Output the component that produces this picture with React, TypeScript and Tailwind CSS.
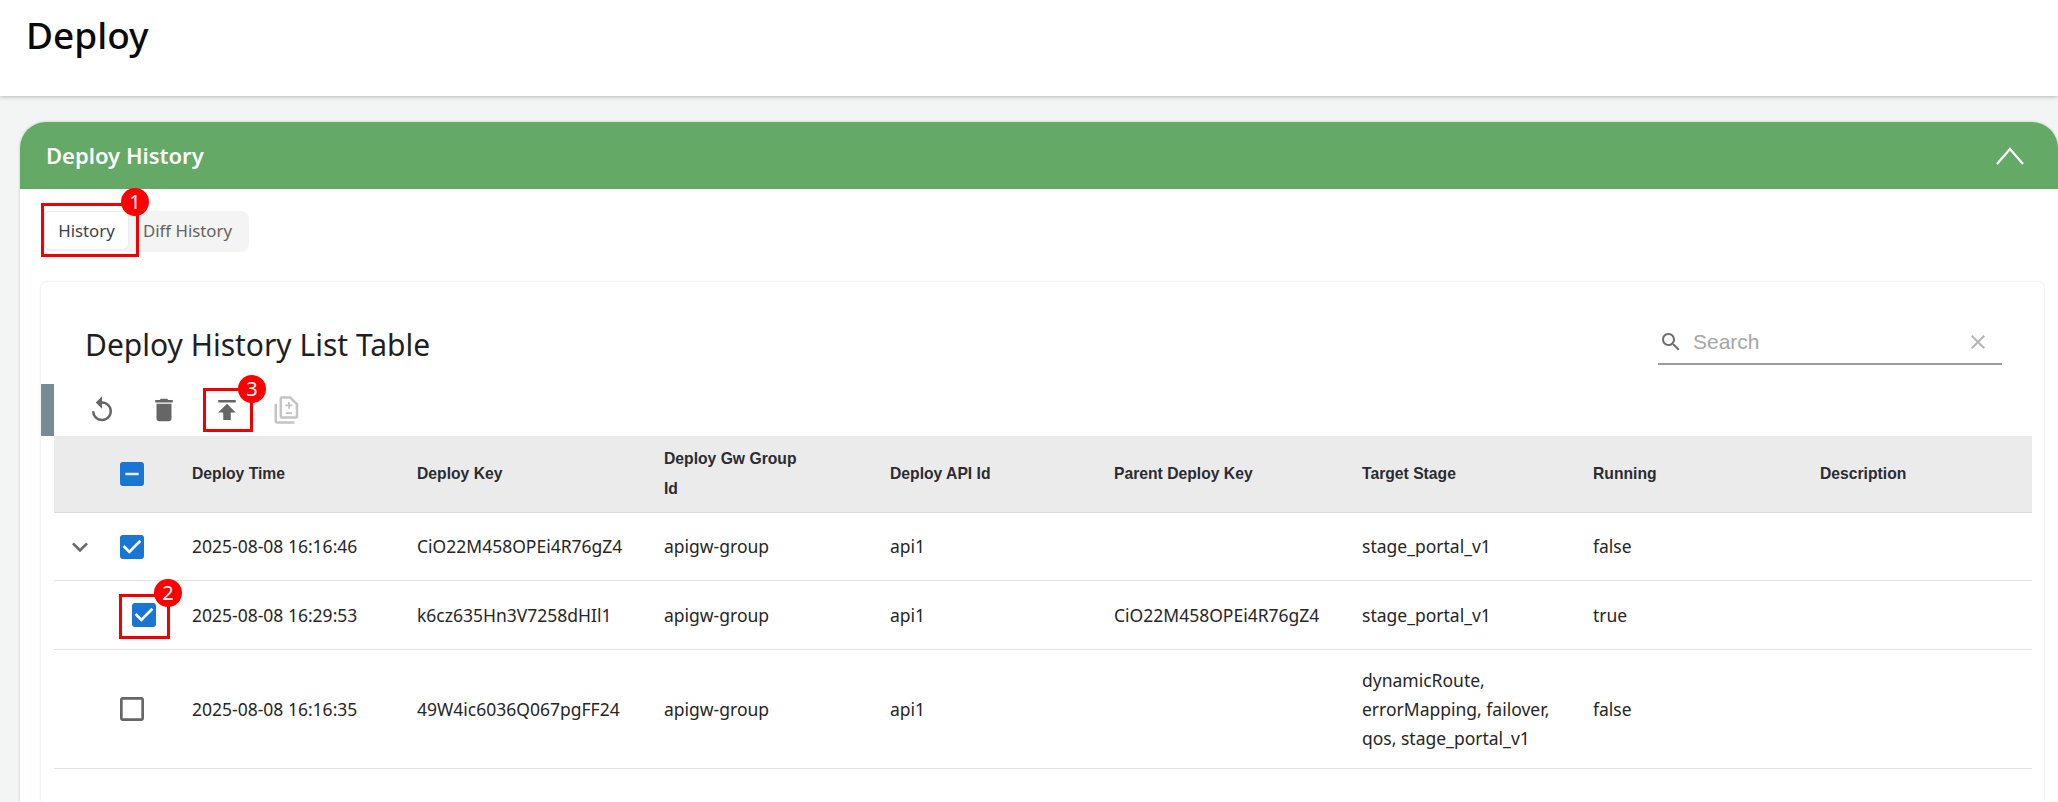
import { ReactNode } from 'react';

const gridCols = 'grid grid-cols-[138px_225px_247px_226px_224px_248px_231px_227px_212px] items-center';

const CHECKED = 'M19 3H5c-1.11 0-2 .9-2 2v14c0 1.1.89 2 2 2h14c1.11 0 2-.9 2-2V5c0-1.1-.89-2-2-2zm-9 14l-5-5 1.41-1.41L10 14.17l7.59-7.59L19 8l-9 9z';
const OUTLINE = 'M19 5v14H5V5h14m0-2H5c-1.1 0-2 .9-2 2v14c0 1.1.9 2 2 2h14c1.1 0 2-.9 2-2V5c0-1.1-.9-2-2-2z';
const MIXED = 'M19 3H5c-1.1 0-2 .9-2 2v14c0 1.1.9 2 2 2h14c1.1 0 2-.9 2-2V5c0-1.1-.9-2-2-2zm-2 10H7v-2h10v2z';

const Icon = ({ d, className }: { d: string; className: string }) => (
  <svg viewBox="0 0 24 24" fill="currentColor" className={className}>
    <path d={d} />
  </svg>
);

const Badge = ({ n, className }: { n: number; className: string }) => (
  <span className={`absolute flex h-[28px] w-[28px] items-center justify-center rounded-full bg-[#fe0000] text-[20px] leading-none text-white ${className}`}>
    {n}
  </span>
);

const headers = ['Deploy Time', 'Deploy Key', 'Deploy Gw Group Id', 'Deploy API Id', 'Parent Deploy Key', 'Target Stage', 'Running', 'Description'];

type Row = {
  time: string;
  key: string;
  parent: string;
  stage: string;
  running: string;
  height: string;
  checkbox: ReactNode;
};

const rows: Row[] = [
  {
    time: '2025-08-08 16:16:46',
    key: 'CiO22M458OPEi4R76gZ4',
    parent: '',
    stage: 'stage_portal_v1',
    running: 'false',
    height: 'h-[68px]',
    checkbox: (
      <div className="flex items-center pl-[10px]">
        <Icon d="M16.59 8.59 12 13.17 7.41 8.59 6 10l6 6 6-6z" className="h-8 w-8 text-[#6b6b6b]" />
        <Icon d={CHECKED} className="ml-[20px] h-8 w-8 text-[#1976d2]" />
      </div>
    ),
  },
  {
    time: '2025-08-08 16:29:53',
    key: 'k6cz635Hn3V7258dHIl1',
    parent: 'CiO22M458OPEi4R76gZ4',
    stage: 'stage_portal_v1',
    running: 'true',
    height: 'h-[69px]',
    checkbox: (
      <div className="relative flex items-center pl-[74px]">
        <Icon d={CHECKED} className="h-8 w-8 text-[#1976d2]" />
        <div className="absolute left-[65px] top-[-5px] h-[45px] w-[51px] border-[3px] border-[#f00000]" />
        <Badge n={2} className="left-[100px] top-[-20px]" />
      </div>
    ),
  },
  {
    time: '2025-08-08 16:16:35',
    key: '49W4ic6036Q067pgFF24',
    parent: '',
    stage: 'dynamicRoute, errorMapping, failover, qos, stage_portal_v1',
    running: 'false',
    height: 'h-[119px]',
    checkbox: (
      <div className="flex items-center pl-[62px]">
        <Icon d={OUTLINE} className="h-8 w-8 text-[#666666]" />
      </div>
    ),
  },
];

export default function App() {
  return (
    <div className="flex h-[802px] flex-col overflow-hidden bg-[#f3f5f5] font-['Noto_Sans',sans-serif] text-[#262626]">
      <header className="flex h-[96px] shrink-0 items-start bg-white pl-[26px] pt-[8px] shadow-[0_1px_4px_rgba(0,0,0,0.25)]">
        <h1 className="text-[37px] font-medium leading-[54px] text-[#0a0a0a]">Deploy</h1>
      </header>

      <section className="ml-[20px] mt-[26px] flex-1 rounded-t-[26px] bg-white shadow-[0_0_3px_rgba(0,0,0,0.2)]">
        <div className="flex h-[67px] items-center justify-between rounded-t-[26px] bg-[#65a966] pl-[26px] pr-[34px] text-white">
          <h2 className="text-[22px] font-semibold">Deploy History</h2>
          <svg viewBox="0 0 28 18" fill="none" stroke="currentColor" strokeWidth="2.2" className="h-[18px] w-[28px]">
            <path d="M1 17 14 2l13 15" />
          </svg>
        </div>

        <div className="relative ml-[22px] mt-[22px] flex h-[41px] w-[207px] rounded-[8px] bg-[#f4f4f5] p-[1px] text-[16.8px]">
          <div className="ml-[2px] flex h-[37px] w-[83px] items-center justify-center rounded-[5px] bg-white text-[#3a3f4a] shadow-[0_0_2px_rgba(0,0,0,0.12)]">History</div>
          <div className="ml-[15px] flex h-[37px] items-center text-[#66625f]">Diff History</div>
          <div className="absolute left-[-1px] top-[-8px] h-[54px] w-[98px] border-[3px] border-[#f00000]" />
          <Badge n={1} className="left-[79px] top-[-23px]" />
        </div>

        <div className="mb-0 ml-[21px] mr-[14px] mt-[30px] h-[520px] rounded-t-[6px] bg-white shadow-[0_0_3px_rgba(0,0,0,0.13)]">
          <div className="flex h-[102px] items-end justify-between pb-[19px] pl-[44px] pr-[42px]">
            <h3 className="text-[30px] font-normal leading-[40px] text-[#1f1f1f]">Deploy History List Table</h3>
            <div className="flex h-[38px] w-[344px] items-center border-b-2 border-[#9a9a9a] pb-[6px] pl-[1px] pr-[12px] font-['Liberation_Sans',sans-serif]">
              <Icon d="M15.5 14h-.79l-.28-.27C15.41 12.59 16 11.11 16 9.5 16 5.91 13.09 3 9.5 3S3 5.91 3 9.5 5.91 16 9.5 16c1.61 0 3.09-.59 4.23-1.57l.27.28v.79l5 4.99L20.49 19l-4.99-5zm-6 0C7.01 14 5 11.99 5 9.5S7.01 5 9.5 5 14 7.01 14 9.5 11.99 14 9.5 14z" className="h-6 w-6 text-[#6e6e6e]" />
              <span className="ml-[10px] flex-1 text-[21px] text-[#a6a6a6]">Search</span>
              <Icon d="M19 6.41L17.59 5 12 10.59 6.41 5 5 6.41 10.59 12 5 17.59 6.41 19 12 13.41 17.59 19 19 17.59 13.41 12z" className="h-6 w-6 text-[#b5b5b5]" />
            </div>
          </div>

          <div className="flex h-[52px] items-center border-l-[13px] border-[#748c92] pl-[17px]">
            <div className="relative flex items-center">
              <button className="flex h-[44px] w-[62px] items-center justify-center text-[#666666]">
                <Icon d="M12 5V1L7 6l5 5V7c3.31 0 6 2.69 6 6s-2.69 6-6 6-6-2.69-6-6H4c0 4.42 3.58 8 8 8s8-3.58 8-8-3.58-8-8-8z" className="h-[30px] w-[30px]" />
              </button>
              <button className="flex h-[44px] w-[62px] items-center justify-center text-[#666666]">
                <Icon d="M6 19c0 1.1.9 2 2 2h8c1.1 0 2-.9 2-2V7H6v12zM19 4h-3.5l-1-1h-5l-1 1H5v2h14V4z" className="h-[30px] w-[30px]" />
              </button>
              <button className="flex h-[44px] w-[63px] items-center justify-center text-[#666666]">
                <Icon d="M5 4v2h14V4H5zm0 10h4v6h6v-6h4l-7-7-7 7z" className="h-[30px] w-[30px]" />
              </button>
              <button className="flex h-[44px] w-[58px] items-center justify-center text-[#c4c4c4]">
                <Icon d="M18 23H4c-1.1 0-2-.9-2-2V7h2v14h14v2zM15 1H8c-1.1 0-1.99.9-1.99 2L6 17c0 1.1.89 2 1.99 2H19c1.1 0 2-.9 2-2V7l-6-6zm4 16H8V3h6.17L19 7.83V17zM11 13.7h5v1.5h-5v-1.500zM12.750 5.500h1.500v2h2V9h-2v2h-1.500V9h-2V7.500h2v-2z" className="h-[30px] w-[30px]" />
              </button>
              <div className="absolute left-[132px] top-0 h-[44px] w-[50px] border-[3px] border-[#f00000]" />
              <Badge n={3} className="left-[167px] top-[-13px]" />
            </div>
          </div>

          <div className="ml-[13px] w-[1978px] text-[17.5px]">
            <div className={`${gridCols} h-[77px] border-b border-[#dddddd] bg-[#ebebeb] font-['Liberation_Sans',sans-serif] text-[15.7px] font-bold leading-[30px] text-[#2b2b33]`}>
              <div className="flex items-center pl-[62px]">
                <Icon d={MIXED} className="h-8 w-8 text-[#1976d2]" />
              </div>
              {headers.map((h) => (
                <div key={h} className={h === 'Deploy Gw Group Id' ? 'w-[140px]' : ''}>{h}</div>
              ))}
            </div>
            {rows.map((r) => (
              <div key={r.time} className={`${gridCols} ${r.height} border-b border-[#e2e2e2] leading-[29px]`}>
                {r.checkbox}
                <div>{r.time}</div>
                <div>{r.key}</div>
                <div>apigw-group</div>
                <div>api1</div>
                <div>{r.parent}</div>
                <div className="pr-[20px]">{r.stage}</div>
                <div>{r.running}</div>
                <div />
              </div>
            ))}
          </div>
        </div>
      </section>
    </div>
  );
}
